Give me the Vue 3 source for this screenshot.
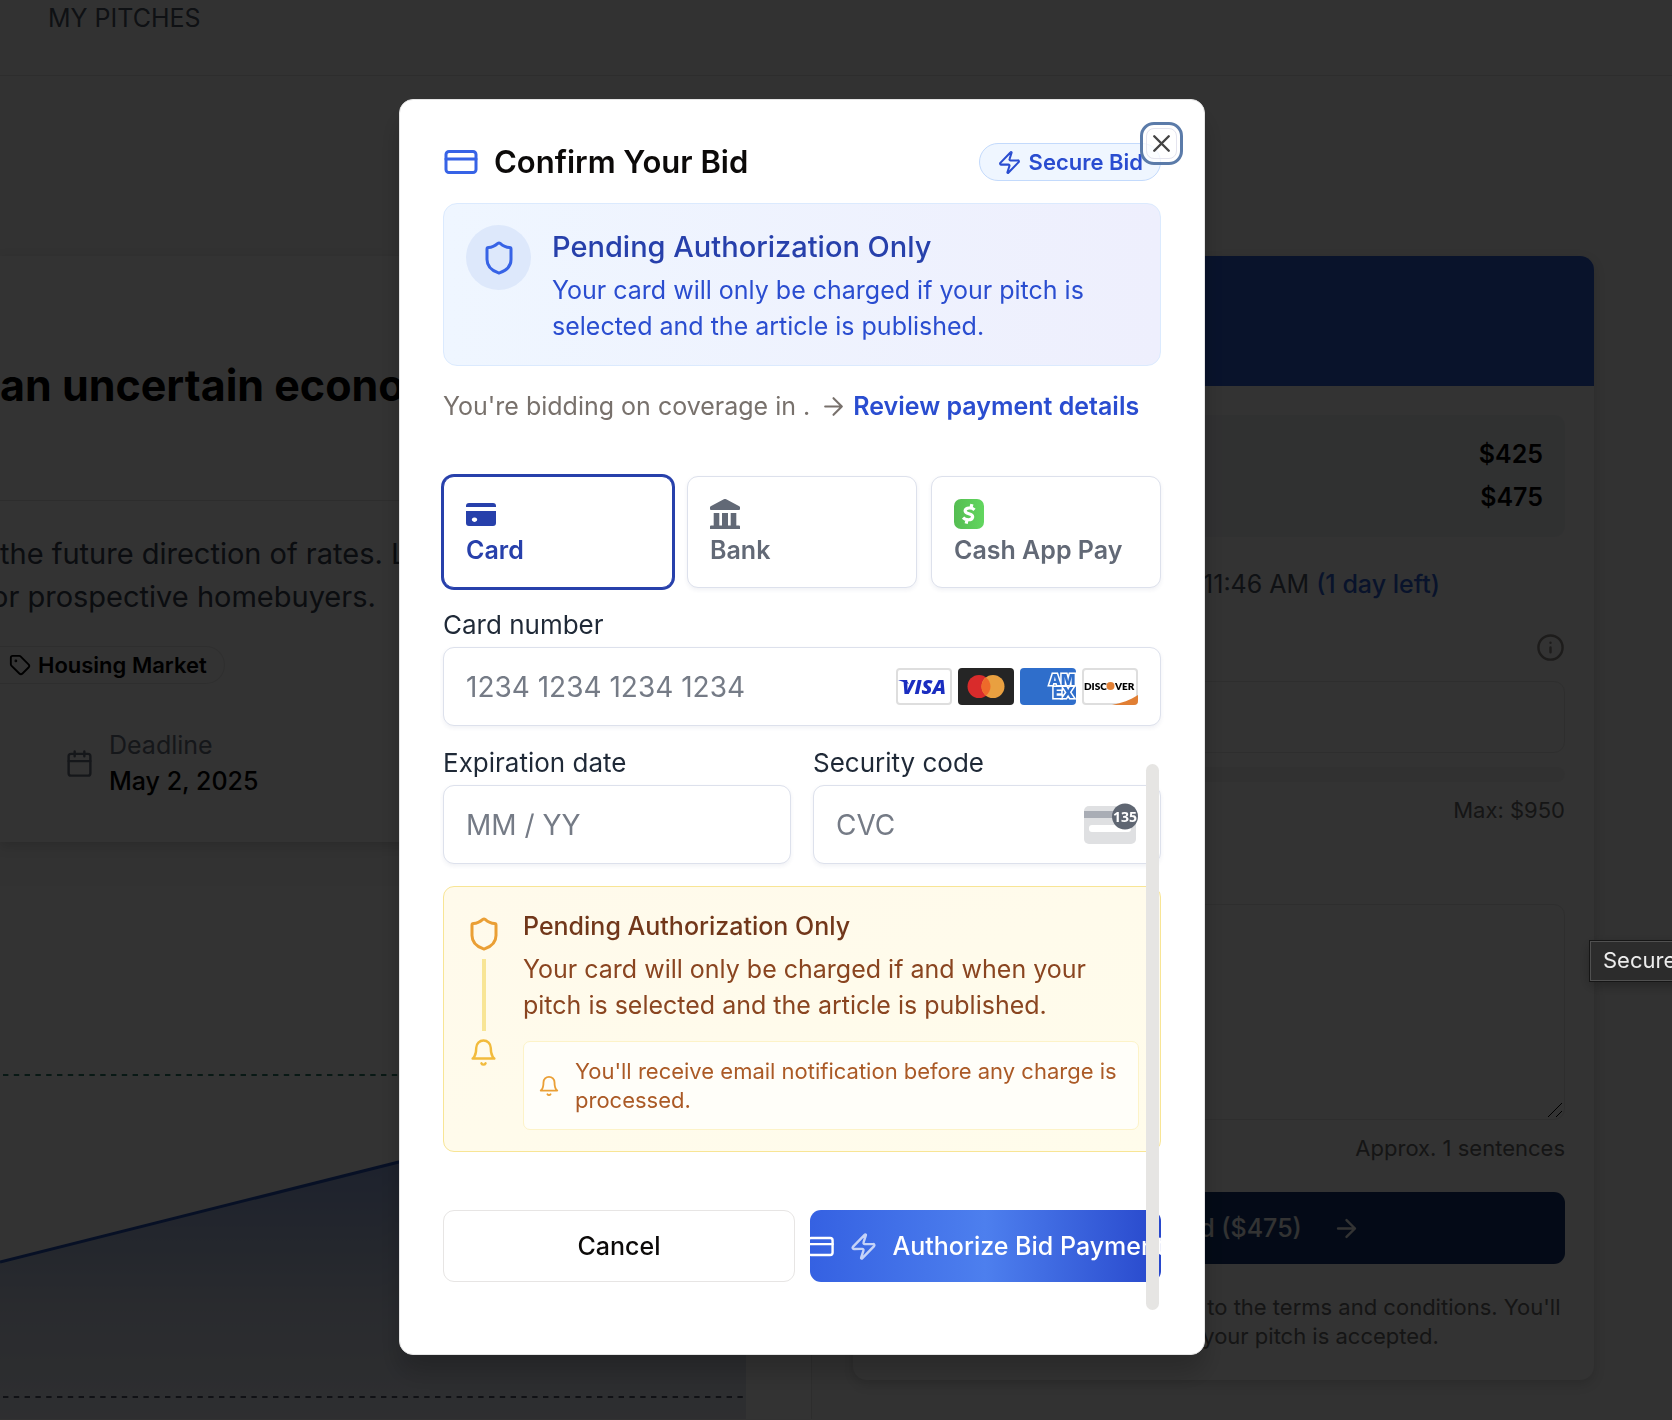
<script setup>
import { ref } from 'vue'

const method = ref('card')
const methods = [
  { id: 'card', label: 'Card' },
  { id: 'bank', label: 'Bank' },
  { id: 'cashapp', label: 'Cash App Pay' },
]
</script>

<template>
  <div class="page">
    <header class="nav">
      <a href="#pitches">MY PITCHES</a>
    </header>

    <main class="columns">
      <div class="left">
        <section class="brief">
          <div class="brief-head">
            <h1>an uncertain economy</h1>
          </div>
          <div class="brief-body">
            <p class="summary">the future direction of rates. Looking<span class="wrapped">or prospective homebuyers.</span></p>
            <div class="tags">
              <span class="tag">
                <svg class="line" width="22" height="22" viewBox="0 0 24 24">
                  <path d="M12.586 2.586A2 2 0 0 0 11.172 2H4a2 2 0 0 0-2 2v7.172a2 2 0 0 0 .586 1.414l8.704 8.704a2.426 2.426 0 0 0 3.42 0l6.58-6.58a2.426 2.426 0 0 0 0-3.42z" />
                  <circle cx="7.5" cy="7.5" r=".5" />
                </svg>
                Housing Market
              </span>
            </div>
            <div class="deadline">
              <svg class="line" width="29" height="29" viewBox="0 0 24 24">
                <path d="M8 2v4M16 2v4M3 10h18" />
                <rect x="3" y="4" width="18" height="18" rx="2" />
              </svg>
              <dl>
                <dt>Deadline</dt>
                <dd>May 2, 2025</dd>
              </dl>
            </div>
          </div>
        </section>

        <section class="chart-card">
          <svg class="chart" width="746" height="533" viewBox="0 0 746 533">
            <defs>
              <linearGradient id="area" gradientUnits="userSpaceOnUse" x1="0" y1="180" x2="0" y2="533">
                <stop offset="0" stop-color="#2d5fd8" stop-opacity=".7" />
                <stop offset=".7" stop-color="#2d4f9c" stop-opacity=".22" />
                <stop offset="1" stop-color="#4a5f9c" stop-opacity=".14" />
              </linearGradient>
            </defs>
            <path d="M0 376 746 189V533H0z" fill="url(#area)" />
            <path d="M0 376 746 189" stroke="#2450b8" stroke-width="3" fill="none" />
            <path d="M3 189H746" stroke="#2f7d68" stroke-width="2" stroke-dasharray="5.4 5.4" fill="none" />
            <path d="M3 511H746" stroke="#52586a" stroke-width="2" stroke-dasharray="5.4 5.4" fill="none" />
          </svg>
        </section>
      </div>

      <aside class="bid">
        <div class="bid-head"></div>
        <div class="bid-body">
          <div class="prices">
            <strong>$425</strong>
            <strong>$475</strong>
          </div>
          <p class="closes">11:46 AM <b>(1 day left)</b></p>
          <div class="info">
            <svg class="line" width="29" height="29" viewBox="0 0 24 24">
              <circle cx="12" cy="12" r="10" />
              <path d="M12 16v-4M12 8h.01" />
            </svg>
          </div>
          <input class="amount" type="text" aria-label="Bid amount" />
          <div class="track"></div>
          <p class="hint">Max: $950</p>
          <div class="pitch">
            <textarea aria-label="Pitch"></textarea>
            <svg class="grip" width="16" height="16" viewBox="0 0 16 16">
              <path d="M1 15 15 1M9 15l6-6" />
            </svg>
          </div>
          <p class="hint">Approx. 1 sentences</p>
          <button class="place" type="button">
            Submit Bid ($475)
            <svg class="line" width="29" height="29" viewBox="0 0 24 24"><path d="M5 12h14M12 5l7 7-7 7" /></svg>
          </button>
          <p class="terms">By submitting a bid, you agree to the terms and conditions. You'll<br />only be charged if your pitch is accepted.</p>
        </div>
      </aside>
    </main>
  </div>

  <div class="overlay">
    <div class="dialog" role="dialog" aria-modal="true" aria-labelledby="dialog-title">
      <header class="dialog-head">
        <svg class="line blue" width="36" height="36" viewBox="0 0 24 24">
          <rect x="2" y="5" width="20" height="14" rx="2" />
          <path d="M2 10h20" />
        </svg>
        <h2 id="dialog-title">Confirm Your Bid</h2>
        <span class="badge">
          <svg class="line" width="25" height="25" viewBox="0 0 24 24">
            <path d="M4 14a1 1 0 0 1-.78-1.63l9.9-10.2a.5.5 0 0 1 .86.46l-1.92 6.02A1 1 0 0 0 13 10h7a1 1 0 0 1 .78 1.63l-9.9 10.2a.5.5 0 0 1-.86-.46l1.92-6.02A1 1 0 0 0 11 14z" />
          </svg>
          Secure Bid
        </span>
      </header>

      <button class="close" type="button" aria-label="Close">
        <svg class="line" width="29" height="29" viewBox="0 0 24 24"><path d="M18 6 6 18M6 6l12 12" /></svg>
      </button>

      <section class="notice">
        <span class="notice-icon">
          <svg class="line blue" width="36" height="36" viewBox="0 0 24 24">
            <path d="M20 13c0 5-3.500 7.500-7.660 8.950a1 1 0 0 1-.67-.01C7.500 20.500 4 18 4 13V6a1 1 0 0 1 1-1c2 0 4.500-1.200 6.240-2.720a1.170 1.170 0 0 1 1.520 0C14.510 3.810 17 5 19 5a1 1 0 0 1 1 1z" />
          </svg>
        </span>
        <div>
          <h3>Pending Authorization Only</h3>
          <p>Your card will only be charged if your pitch is selected and the article is published.</p>
        </div>
      </section>

      <p class="coverage">
        You're bidding on coverage in .
        <svg class="line" width="25" height="25" viewBox="0 0 24 24"><path d="M4 12h16M12 4l8 8-8 8" /></svg>
        <a href="#details">Review payment details</a>
      </p>

      <form class="payment" @submit.prevent>
        <div class="methods">
          <button
            v-for="m in methods"
            :key="m.id"
            type="button"
            class="method"
            :class="{ selected: method === m.id }"
            :aria-pressed="method === m.id"
            @click="method = m.id"
          >
            <svg v-if="m.id === 'card'" width="30" height="30" viewBox="0 0 30 30" fill="currentColor">
              <path d="M0 8V7a3 3 0 0 1 3-3h24a3 3 0 0 1 3 3v1z" />
              <path fill-rule="evenodd" d="M0 12h30v12a3 3 0 0 1-3 3H3a3 3 0 0 1-3-3zM8.500 18.500a2.700 2.200 0 1 0 .01 0z" />
            </svg>
            <svg v-else-if="m.id === 'bank'" width="30" height="30" viewBox="0 0 30 30" fill="currentColor">
              <path d="M13.800.3a2.500 2.500 0 0 1 2.400 0L29.300 7.200a1.300 1.300 0 0 1 .7 1.200V10a1 1 0 0 1-1 1H1a1 1 0 0 1-1-1V8.400a1.300 1.300 0 0 1 .7-1.200zM3.700 14h5.600v12.500h2.700V14h6v12.500h2.700V14h5.600v12.500H29a1 1 0 0 1 1 1V30H0v-2.500a1 1 0 0 1 1-1h2.700z" />
            </svg>
            <svg v-else width="30" height="30" viewBox="0 0 30 30">
              <defs>
                <linearGradient id="cash"><stop stop-color="#55bd52" /><stop offset="1" stop-color="#62d65f" /></linearGradient>
              </defs>
              <rect width="30" height="30" rx="7" fill="url(#cash)" />
              <path d="M20.500 10.800c-2.700-2.600-8.800-2.400-9.300.8-.6 4 8.200 2.200 7.400 6.500-.7 3.500-6.800 3.400-9.600.6M17.900 5.200 17.100 8.500M13 21l-.8 3.600" fill="none" stroke="#fff" stroke-width="3.200" />
            </svg>
            <span>{{ m.label }}</span>
          </button>
        </div>

        <div class="field">
          <label for="number">Card number</label>
          <div class="control">
            <input id="number" type="text" placeholder="1234 1234 1234 1234" />
            <div class="brands">
              <svg width="56" height="37" viewBox="0 0 56 37">
                <rect x="1" y="1" width="54" height="35" rx="3" fill="#fff" stroke="#dedede" stroke-width="2" />
                <path d="M2 12h8l3 4" fill="#1a2dc0" />
                <text x="28" y="26" text-anchor="middle" class="visa">VISA</text>
              </svg>
              <svg width="56" height="37" viewBox="0 0 56 37">
                <rect width="56" height="37" rx="4" fill="#252525" />
                <circle cx="21" cy="18.500" r="11.500" fill="#d92b2b" />
                <circle cx="35" cy="18.500" r="11.500" fill="#e9a040" />
                <path d="M28 9.400a11.500 11.500 0 0 1 0 18.200 11.500 11.500 0 0 1 0-18.200z" fill="#ee6a2a" />
              </svg>
              <svg width="56" height="37" viewBox="0 0 56 37">
                <rect width="56" height="37" rx="4" fill="#2f6ecb" />
                <text x="29" y="17" class="amex">AM</text>
                <text x="33" y="30" class="amex">EX</text>
              </svg>
              <svg width="56" height="37" viewBox="0 0 56 37">
                <rect x="1" y="1" width="54" height="35" rx="3" fill="#fff" stroke="#dedede" stroke-width="2" />
                <path d="M30 37c10-2 18-5 26-10v6a4 4 0 0 1-4 4z" fill="#e17f34" />
                <text x="2" y="22" class="discover">DISC</text>
                <circle cx="28.500" cy="18" r="4" fill="#e17f34" />
                <text x="33" y="22" class="discover">VER</text>
              </svg>
            </div>
          </div>
        </div>

        <div class="pair">
          <div class="field">
            <label for="expiry">Expiration date</label>
            <div class="control"><input id="expiry" type="text" placeholder="MM / YY" /></div>
          </div>
          <div class="field">
            <label for="cvc">Security code</label>
            <div class="control">
              <input id="cvc" type="text" placeholder="CVC" />
              <svg width="54" height="44" viewBox="0 0 54 44">
                <rect y="3" width="52" height="38" rx="5" fill="#dfe0e2" />
                <rect y="8" width="52" height="7" fill="#a9adb5" />
                <rect x="5" y="22" width="42" height="7" rx="3" fill="#fff" />
                <circle cx="41" cy="13.500" r="13" fill="#5f6672" />
                <text x="41" y="18.500" text-anchor="middle" class="cvc">135</text>
              </svg>
            </div>
          </div>
        </div>

        <section class="warning">
          <div class="rail">
            <svg class="line shield" width="36" height="36" viewBox="0 0 24 24">
              <path d="M20 13c0 5-3.500 7.500-7.660 8.950a1 1 0 0 1-.67-.01C7.500 20.500 4 18 4 13V6a1 1 0 0 1 1-1c2 0 4.500-1.200 6.240-2.720a1.170 1.170 0 0 1 1.520 0C14.510 3.810 17 5 19 5a1 1 0 0 1 1 1z" />
            </svg>
            <span class="bar"></span>
            <svg class="line bell" width="29" height="29" viewBox="0 0 24 24">
              <path d="M6 8a6 6 0 0 1 12 0c0 7 3 9 3 9H3s3-2 3-9M10.300 21a1.940 1.940 0 0 0 3.400 0" />
            </svg>
          </div>
          <div class="warning-text">
            <h3>Pending Authorization Only</h3>
            <p>Your card will only be charged if and when your pitch is selected and the article is published.</p>
            <div class="email">
              <svg class="line" width="22" height="22" viewBox="0 0 24 24">
                <path d="M6 8a6 6 0 0 1 12 0c0 7 3 9 3 9H3s3-2 3-9M10.300 21a1.940 1.940 0 0 0 3.400 0" />
              </svg>
              <span>You'll receive email notification before any charge is processed.</span>
            </div>
          </div>
        </section>

        <footer class="actions">
          <button class="cancel" type="button">Cancel</button>
          <button class="authorize" type="submit">
            <svg class="line" width="29" height="29" viewBox="0 0 24 24">
              <rect x="2" y="5" width="20" height="14" rx="2" />
              <path d="M2 10h20" />
            </svg>
            <svg class="line faint" width="29" height="29" viewBox="0 0 24 24">
              <path d="M4 14a1 1 0 0 1-.78-1.63l9.9-10.2a.5.5 0 0 1 .86.46l-1.92 6.02A1 1 0 0 0 13 10h7a1 1 0 0 1 .78 1.63l-9.9 10.2a.5.5 0 0 1-.86-.46l1.92-6.02A1 1 0 0 0 11 14z" />
            </svg>
            Authorize Bid Payment
          </button>
        </footer>
      </form>

      <span class="thumb"></span>
    </div>
  </div>

  <div class="tooltip" role="tooltip">Secure Bid</div>
</template>

<style>
body {
  margin: 0;
  overflow: hidden;
}
</style>

<style scoped>
.page,
.overlay,
.tooltip {
  font-family: Inter, "Liberation Sans", sans-serif;
  font-size: 25px;
  line-height: 36px;
  font-optical-sizing: none;
}
.page *,
.overlay * {
  box-sizing: border-box;
}
h1, h2, h3, p, dl, dd {
  margin: 0;
}
button, input, textarea {
  font: inherit;
  color: inherit;
}
a {
  text-decoration: none;
}
svg {
  display: block;
  flex: none;
}
.line {
  fill: none;
  stroke: currentColor;
  stroke-width: 2;
  stroke-linecap: round;
  stroke-linejoin: round;
}
.blue {
  color: #3763e6;
}

/* page behind the dialog */
.page {
  height: 100vh;
  overflow: hidden;
  background: #f7f7f7;
  color: #000;
}
.nav {
  padding: 0 48px 39px;
  background: #fbfbfb;
  border-bottom: 1px solid #dedede;
}
.nav a {
  color: #4b5563;
}
.columns {
  display: grid;
  grid-template-columns: minmax(0, 1fr) 741px;
  gap: 41px;
  align-items: start;
  padding: 180px 78px 0 0;
}
.brief {
  background: #fcfcfc;
  box-shadow: 0 4px 12px rgba(0, 0, 0, 0.15);
  white-space: nowrap;
  overflow: hidden;
}
.brief-head {
  padding: 103px 0 89px;
  border-bottom: 1px solid #e2e2e2;
}
h1 {
  font-size: 43px;
  line-height: 52px;
  font-weight: 700;
}
.brief-body {
  padding: 31px 0 43px;
}
.summary {
  font-size: 29px;
  line-height: 43px;
  color: #374151;
}
.wrapped {
  display: block;
  margin-left: -9px;
}
.tags {
  display: flex;
  margin-top: 28px;
}
.tag {
  display: flex;
  align-items: center;
  gap: 7px;
  padding: 3px 17px 3px 9px;
  border: 1px solid #e7e7e7;
  border-left: 0;
  border-radius: 0 19px 19px 0;
  font-size: 22px;
  line-height: 30px;
  font-weight: 600;
}
.deadline {
  display: flex;
  align-items: center;
  gap: 15px;
  margin: 43px 0 0 65px;
  color: #6b7280;
}
.deadline dd {
  color: #000;
  font-weight: 500;
}
.chart-card {
  margin-top: 44px;
  border-right: 1px solid #e2e2e2;
  background: #fdfdfd;
}
.bid {
  border-radius: 14px;
  background: #fcfcfc;
  box-shadow: 0 4px 12px rgba(0, 0, 0, 0.15);
}
.bid-head {
  height: 130px;
  border-radius: 14px 14px 0 0;
  background: #2d5fd8;
}
.bid-body {
  padding: 29px;
  display: flex;
  flex-direction: column;
  text-align: right;
}
.prices {
  display: flex;
  flex-direction: column;
  gap: 7px;
  padding: 21px 22px 22px;
  border-radius: 11px;
  background: #f1f3f6;
}
.prices strong {
  font-weight: 600;
}
.closes {
  margin: 29px 125px 31px 0;
  color: #4b5563;
}
.closes b {
  color: #2d5fd8;
  font-weight: 500;
}
.info {
  display: flex;
  justify-content: flex-end;
  color: #8f8a86;
}
.amount {
  height: 72px;
  margin: 19px 0 14px;
  border: 1px solid #e7e7e7;
  border-radius: 11px;
  background: none;
}
.track {
  height: 15px;
  border-radius: 8px;
  background: #f5f5f5;
}
.hint {
  margin-top: 14px;
  font-size: 22px;
  line-height: 29px;
  color: #6b6b6b;
}
.pitch {
  position: relative;
  margin-top: 79px;
}
.pitch textarea {
  display: block;
  width: 100%;
  height: 216px;
  border: 1px solid #e7e7e7;
  border-radius: 11px;
  background: none;
  resize: none;
}
.grip {
  position: absolute;
  right: 2px;
  bottom: 2px;
  stroke: #000;
  fill: none;
}
.place {
  display: flex;
  align-items: center;
  justify-content: center;
  gap: 30px;
  height: 72px;
  margin: 29px 0;
  border: 0;
  border-radius: 11px;
  background: #143672;
  color: #fff;
  font-weight: 500;
}
.terms {
  font-size: 22px;
  line-height: 29px;
  text-align: center;
  white-space: nowrap;
  color: #6b6b6b;
}

/* dialog */
.overlay {
  position: fixed;
  inset: 0;
  display: flex;
  justify-content: center;
  align-items: flex-start;
  padding: 99px 68px 0 0;
  background: rgba(0, 0, 0, 0.8);
}
.dialog {
  position: relative;
  width: 100%;
  max-width: 806px;
  padding: 43px 43px 72px;
  border: 1px solid #e5e5e5;
  border-radius: 14px;
  background: #fff;
  box-shadow: 0 18px 27px rgba(0, 0, 0, 0.2);
}
.dialog-head {
  display: flex;
  align-items: center;
  gap: 15px;
  height: 38px;
}
h2 {
  font-size: 31px;
  font-weight: 600;
  font-optical-sizing: auto;
  color: #0c0a09;
}
.badge {
  display: flex;
  align-items: center;
  gap: 7px;
  margin-left: auto;
  padding: 3px 17px;
  border: 1px solid #c3dafc;
  border-radius: 19px;
  background: #eff6ff;
  color: #2a4dd0;
  font-size: 22px;
  line-height: 30px;
  font-weight: 600;
}
.close {
  position: absolute;
  top: 28px;
  right: 27px;
  display: grid;
  place-items: center;
  width: 31px;
  height: 31px;
  padding: 0;
  border: 1px solid #e4e4ee;
  border-radius: 8px;
  outline: 3px solid #5b7ba9;
  outline-offset: 3px;
  background: rgba(255, 255, 255, 0.75);
  box-shadow: 0 0 0 3px rgba(255, 255, 255, 0.75);
  color: #444;
}
.notice {
  display: flex;
  gap: 21px;
  margin-top: 22px;
  padding: 21px 22px;
  border: 1px solid #dbeafe;
  border-radius: 14px;
  background: linear-gradient(to right, #eff6ff, #eeeffd);
  color: #2a4dd0;
}
.notice-icon {
  flex: none;
  display: grid;
  place-items: center;
  width: 65px;
  height: 65px;
  border-radius: 50%;
  background: #dde8fb;
}
.notice h3 {
  margin-bottom: 3px;
  font-size: 29px;
  line-height: 44px;
  font-weight: 500;
  color: #2740ab;
}
.coverage {
  display: flex;
  align-items: center;
  margin: 22px 0 52px;
  color: #78716c;
  white-space: nowrap;
}
.coverage svg {
  margin: 0 7px 0 11px;
}
.coverage a {
  color: #2a4dd0;
  font-weight: 600;
}
.payment {
  display: flex;
  flex-direction: column;
  gap: 22px;
}
.methods {
  display: grid;
  grid-template-columns: repeat(3, 1fr);
  gap: 14px;
}
.method {
  display: flex;
  flex-direction: column;
  align-items: flex-start;
  gap: 3px;
  height: 112px;
  padding: 22px;
  border: 1px solid #dde1ec;
  border-radius: 11px;
  background: #fff;
  box-shadow: 0 2px 4px rgba(40, 50, 110, 0.07);
  color: #626976;
  font-weight: 600;
}
.method.selected {
  border-color: #2740ab;
  box-shadow: 0 0 0 2px #2740ab;
  color: #2740ab;
}
.field {
  min-width: 0;
}
.field label {
  display: block;
  margin-bottom: 7px;
  font-size: 26px;
  line-height: 30px;
  color: #1f2937;
}
.control {
  display: flex;
  align-items: center;
  height: 79px;
  padding: 0 22px;
  border: 1px solid #dde1ec;
  border-radius: 11px;
  background: #fff;
  box-shadow: 0 2px 4px rgba(40, 50, 110, 0.07);
}
.control input {
  flex: 1;
  width: 0;
  min-width: 0;
  padding: 0;
  border: 0;
  outline: 0;
  background: none;
  font-size: 28px;
  font-optical-sizing: auto;
}
.control input::placeholder {
  color: #757b86;
  opacity: 1;
}
.brands {
  display: flex;
  gap: 6px;
}
.visa {
  font: italic 800 20px "Open Sans", sans-serif;
  fill: #1a2dc0;
}
.amex {
  font: 900 15px Inter, sans-serif;
  fill: #2f6ecb;
  stroke: #fff;
  stroke-width: 3px;
  paint-order: stroke;
}
.discover {
  font: 800 10px Lato, sans-serif;
  fill: #000;
}
.cvc {
  font: 700 14px "Noto Sans", sans-serif;
  fill: #fff;
}
.pair {
  display: grid;
  grid-template-columns: 1fr 1fr;
  gap: 22px;
}
.warning {
  display: flex;
  gap: 21px;
  padding: 21px;
  border: 1px solid #f8e595;
  border-radius: 11px;
  background: linear-gradient(to bottom right, #fffaeb, #fffceb);
  color: #8a4520;
}
.rail {
  display: flex;
  flex-direction: column;
  align-items: center;
  gap: 7px;
  width: 37px;
  padding-top: 8px;
}
.shield {
  color: #ea9f35;
}
.bar {
  width: 4px;
  height: 72px;
  background: #f8e595;
}
.bell {
  color: #f2bb3c;
}
.warning-text {
  flex: 1;
}
.warning h3 {
  margin-bottom: 7px;
  font-size: 25px;
  font-weight: 500;
  color: #71371a;
}
.email {
  display: flex;
  align-items: center;
  gap: 15px;
  margin-top: 18px;
  padding: 15px 14px 14px;
  border: 1px solid #fdf3c8;
  border-radius: 7px;
  background: rgba(255, 255, 255, 0.7);
  color: #ab5a26;
  font-size: 22px;
  line-height: 29px;
}
.email svg {
  color: #ea9f35;
}
.actions {
  display: grid;
  grid-template-columns: 352fr 351fr;
  gap: 15px;
  margin-top: 36px;
}
.actions button {
  height: 72px;
  border-radius: 11px;
  font-weight: 500;
}
.cancel {
  border: 1px solid #e7e5e4;
  background: #fff;
  color: #0c0a09;
}
.authorize {
  display: flex;
  align-items: center;
  justify-content: center;
  gap: 14px;
  min-width: 0;
  overflow: hidden;
  padding: 0;
  border: 0;
  background: linear-gradient(to right, #3561e2, #4d7fee 50%, #2848cc);
  color: #fff;
  white-space: nowrap;
}
.faint {
  opacity: 0.7;
}
.thumb {
  position: absolute;
  top: 664px;
  right: 45px;
  bottom: 44px;
  width: 13px;
  border-radius: 7px;
  background: #e6e5e3;
}
.tooltip {
  position: fixed;
  left: calc(100% - 82px);
  top: 941px;
  padding: 2px 12px 4px;
  border: 1px solid #505050;
  outline: 1px solid #161616;
  background: #2c2c2c;
  box-shadow: 0 4px 14px rgba(0, 0, 0, 0.3);
  color: #ececec;
  font-size: 22px;
  line-height: 32px;
  white-space: nowrap;
}
</style>
